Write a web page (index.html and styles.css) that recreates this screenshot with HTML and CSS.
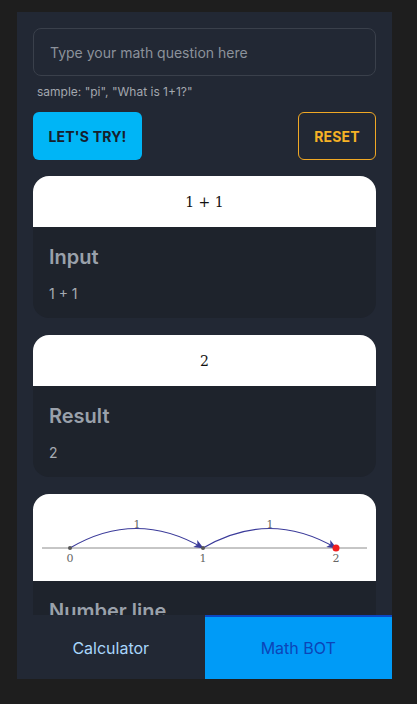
FILE: index.html
```html
<!DOCTYPE html>
<html lang="en">
<head>
<meta charset="utf-8">
<title>Math BOT</title>
<link rel="stylesheet" href="styles.css">
</head>
<body>
<div class="app">
  <main class="content">
    <input class="question" type="text" placeholder="Type your math question here">
    <p class="hint">sample: "pi", "What is 1+1?"</p>
    <div class="actions">
      <button class="btn btn-try">LET'S TRY!</button>
      <button class="btn btn-reset">RESET</button>
    </div>
    <section class="card">
      <div class="card-math"><span class="math">1 + 1</span></div>
      <div class="card-body">
        <h2 class="card-title">Input</h2>
        <p class="card-text">1 + 1</p>
      </div>
    </section>
    <section class="card">
      <div class="card-math"><span class="math">2</span></div>
      <div class="card-body">
        <h2 class="card-title">Result</h2>
        <p class="card-text">2</p>
      </div>
    </section>
    <section class="card">
      <div class="card-math card-plot">
        <svg class="numline" width="343" height="87" viewBox="0 0 343 87">
          <defs>
            <marker id="arr" markerWidth="10" markerHeight="8" refX="9" refY="4" orient="auto" markerUnits="userSpaceOnUse">
              <path d="M0,0 L10,4 L0,8 L2.5,4 Z" fill="#3b3b9a"/>
            </marker>
          </defs>
          <line x1="9" y1="54" x2="334" y2="54" stroke="#8c8c8c" stroke-width="1"/>
          <path d="M37,54 Q103,15 170,54" fill="none" stroke="#3b3b9a" stroke-width="1.2" marker-end="url(#arr)"/>
          <path d="M170,54 Q236,15 303,54" fill="none" stroke="#3b3b9a" stroke-width="1.2" marker-end="url(#arr)"/>
          <circle cx="37" cy="54" r="2" fill="#555"/>
          <circle cx="170" cy="54" r="2" fill="#555"/>
          <circle cx="303" cy="54" r="3.5" fill="#f01e1e"/>
          <text x="37" y="68" class="nl-label">0</text>
          <text x="170" y="68" class="nl-label">1</text>
          <text x="303" y="68" class="nl-label">2</text>
          <text x="104" y="34" class="nl-label">1</text>
          <text x="237" y="34" class="nl-label">1</text>
        </svg>
      </div>
      <div class="card-body">
        <h2 class="card-title">Number line</h2>
      </div>
    </section>
  </main>
  <nav class="tabs">
    <button class="tab">Calculator</button>
    <button class="tab tab-active">Math BOT</button>
  </nav>
</div>
</body>
</html>
```
FILE: styles.css
```css
* { box-sizing: border-box; }
html, body { margin: 0; padding: 0; }
body {
  background: #1e1e1e;
  font-family: Inter, "Noto Sans", sans-serif;
  width: 417px;
  height: 704px;
  overflow: hidden;
}
.app {
  margin: 12px 0 0 17px;
  width: 375px;
  height: 667px;
  background: #222834;
  display: flex;
  flex-direction: column;
}
.content {
  flex: 1;
  overflow: hidden;
  padding: 16px 16px 0;
  display: flex;
  flex-direction: column;
}
.question {
  height: 48px;
  width: 100%;
  flex: none;
  border: 1px solid #3a404b;
  border-radius: 8px;
  background: #222834;
  padding: 0 16px;
  font-family: Inter, sans-serif;
  font-size: 14px;
  color: #e0e0e0;
  outline: none;
}
.question::placeholder { color: #8c929b; }
.hint {
  margin: 8px 0 0 4px;
  font-size: 12px;
  line-height: 16px;
  color: #a3a7ae;
}
.actions {
  margin-top: 12px;
  display: flex;
  justify-content: space-between;
  flex: none;
}
.btn {
  height: 48px;
  border-radius: 6px;
  font-family: Inter, sans-serif;
  font-weight: 700;
  font-size: 14px;
  letter-spacing: 0.2px;
  cursor: pointer;
}
.btn-try {
  width: 109px;
  background: #00b5f6;
  color: #17202c;
  border: none;
}
.btn-reset {
  width: 78px;
  background: transparent;
  color: #f6b226;
  border: 1px solid #f0a825;
}
.card {
  flex: none;
  margin-top: 16px;
  border-radius: 16px;
  overflow: hidden;
  background: #1e232c;
}
.card + .card { margin-top: 17px; }
.card-math {
  background: #ffffff;
  height: 51px;
  display: flex;
  align-items: center;
  justify-content: center;
}
.card-plot { height: 87px; display: block; }
.numline { display: block; }
.math {
  font-family: "DejaVu Serif", "Liberation Serif", serif;
  font-size: 14px;
  color: #111;
}
.nl-label {
  font-family: "DejaVu Serif", serif;
  font-size: 11px;
  fill: #666;
  text-anchor: middle;
}
.card-body {
  padding: 18px 16px 14px;
}
.card-title {
  margin: 0;
  font-size: 20px;
  line-height: 24px;
  font-weight: 600;
  color: #9aa1ab;
}
.card-text {
  margin: 15px 0 0;
  font-size: 14px;
  line-height: 20px;
  color: #a6abb2;
}
.tabs {
  flex: none;
  height: 64px;
  display: flex;
  background: #222834;
}
.tab {
  flex: 1;
  border: none;
  background: #222834;
  font-family: Inter, sans-serif;
  font-size: 16px;
  color: #a9d6fb;
  border-top: 2px solid transparent;
}
.tab-active {
  background: #009bf7;
  color: #0c45b8;
  border-top: 2px solid #0b47c2;
}
```
